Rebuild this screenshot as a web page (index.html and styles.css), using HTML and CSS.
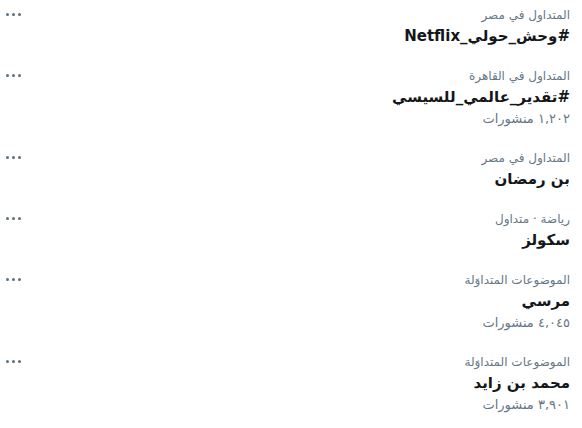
FILE: index.html
```html
<!DOCTYPE html>
<html lang="ar" dir="rtl">
<head>
<meta charset="utf-8">
<link rel="stylesheet" href="styles.css">
</head>
<body>
<div class="list">
  <div class="trend">
    <div class="info">
      <div class="meta">المتداول في مصر</div>
      <div class="title">#وحش_حولي_Netflix</div>
    </div>
    <div class="more"><span></span><span></span><span></span></div>
  </div>
  <div class="trend">
    <div class="info">
      <div class="meta">المتداول في القاهرة</div>
      <div class="title">#تقدير_عالمي_للسيسي</div>
      <div class="count">١,٢٠٢ منشورات</div>
    </div>
    <div class="more"><span></span><span></span><span></span></div>
  </div>
  <div class="trend">
    <div class="info">
      <div class="meta">المتداول في مصر</div>
      <div class="title">بن رمضان</div>
    </div>
    <div class="more"><span></span><span></span><span></span></div>
  </div>
  <div class="trend">
    <div class="info">
      <div class="meta">رياضة · متداول</div>
      <div class="title">سكولز</div>
    </div>
    <div class="more"><span></span><span></span><span></span></div>
  </div>
  <div class="trend">
    <div class="info">
      <div class="meta">الموضوعات المتداوَلة</div>
      <div class="title">مرسي</div>
      <div class="count">٤,٠٤٥ منشورات</div>
    </div>
    <div class="more"><span></span><span></span><span></span></div>
  </div>
  <div class="trend">
    <div class="info">
      <div class="meta">الموضوعات المتداوَلة</div>
      <div class="title">محمد بن زايد</div>
      <div class="count">٣,٩٠١ منشورات</div>
    </div>
    <div class="more"><span></span><span></span><span></span></div>
  </div>
</div>
</body>
</html>
```
FILE: styles.css
```css
html, body {
  margin: 0;
  padding: 0;
  background: #ffffff;
}
body {
  font-family: "DejaVu Sans", sans-serif;
  direction: rtl;
}
.list {
  display: flex;
  flex-direction: column;
}
.trend {
  display: flex;
  justify-content: space-between;
  align-items: flex-start;
  padding: 6px 12px 14px 6px;
}
.info {
  display: flex;
  flex-direction: column;
}
.meta {
  font-size: 12px;
  line-height: 19px;
  color: #657786;
}
.title {
  font-size: 15px;
  font-weight: bold;
  line-height: 22px;
  color: #14171a;
}
.count {
  font-size: 13px;
  line-height: 21px;
  color: #657786;
}
.more {
  display: flex;
  gap: 3px;
  margin-top: 7px;
}
.more span {
  width: 3px;
  height: 3px;
  border-radius: 50%;
  background: #5b7083;
}
```
